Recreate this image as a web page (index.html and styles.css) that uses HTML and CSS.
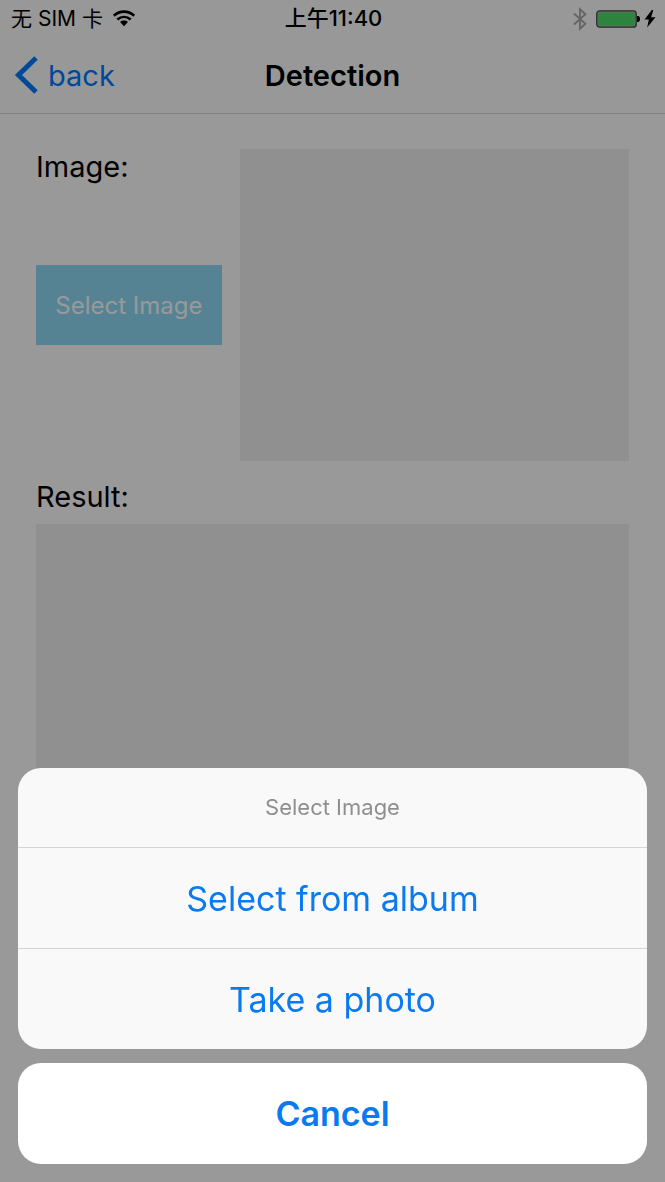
FILE: index.html
```html
<!DOCTYPE html>
<html lang="en">
<head>
<meta charset="utf-8">
<meta name="viewport" content="width=device-width, initial-scale=1">
<title>Detection</title>
<link rel="stylesheet" href="styles.css">
</head>
<body>
<div class="screen">
  <header class="top">
    <div class="status">
      <div class="status-left">
        <span>无 SIM 卡</span>
        <svg class="wifi" width="22" height="17" viewBox="0 0 22 17" aria-hidden="true">
          <path d="M.8 5.700C6.800 .2 15.200 .2 21.200 5.700" fill="none" stroke="#000" stroke-width="2.800"/>
          <path d="M4.300 9.500c4-3.400 9.400-3.400 13.400 0" fill="none" stroke="#000" stroke-width="2.600"/>
          <path d="M7.100 12c2.300-1.900 5.500-1.900 7.800 0L11 16.200z"/>
        </svg>
      </div>
      <div class="status-time">上午11:40</div>
      <div class="status-right">
        <svg width="16" height="24" viewBox="0 0 16 24" aria-hidden="true">
          <path d="M2 6.500l11.400 10.300L8 21.800V2.200l5.400 5L2 17.500" fill="none" stroke="#a9a9a9" stroke-width="1.900"/>
        </svg>
        <svg width="44" height="18" viewBox="0 0 44 18" aria-hidden="true">
          <rect x=".8" y=".8" width="39.400" height="16.400" rx="2.800" fill="#b4b4b4" stroke="#404a42" stroke-width="1.300"/>
          <rect x="2.400" y="2.400" width="36.200" height="13.200" rx="1.200" fill="#4cdc64"/>
          <path d="M41 6h1c1.200 0 2 1 2 3s-.8 3-2 3h-1z"/>
        </svg>
        <svg width="12" height="18" viewBox="0 0 12 18" aria-hidden="true">
          <path d="M7.800 0L.5 9.600h4.300L3.200 17.500 11.500 7.300H7.100L9.300 0z"/>
        </svg>
      </div>
    </div>
    <nav class="nav">
      <a class="back" href="#">
        <svg width="24" height="38" viewBox="0 0 24 38" aria-hidden="true">
          <path d="M22 2L4.500 19 22 36" fill="none" stroke="#007aff" stroke-width="5"/>
        </svg>
        <span>back</span>
      </a>
      <h1 class="title">Detection</h1>
    </nav>
  </header>
  <main class="content">
    <section class="picker">
      <div class="picker-side">
        <h2 class="label">Image:</h2>
        <button class="select" type="button">Select Image</button>
      </div>
      <div class="preview"></div>
    </section>
    <h2 class="label result-label">Result:</h2>
    <div class="preview result"></div>
  </main>
</div>
<div class="backdrop">
  <div class="sheet" role="dialog" aria-modal="true" aria-labelledby="sheet-title">
    <div class="group">
      <p class="sheet-title" id="sheet-title">Select Image</p>
      <button class="action" type="button">Select from album</button>
      <button class="action" type="button">Take a photo</button>
    </div>
    <button class="action cancel" type="button">Cancel</button>
  </div>
</div>
</body>
</html>
```
FILE: styles.css
```css
* {
  box-sizing: border-box;
}

body {
  margin: 0;
  background: #fff;
  color: #000;
  font-family: Inter, "Noto Sans CJK SC", sans-serif;
}

button {
  border: 0;
  font: inherit;
  cursor: pointer;
}

.screen {
  display: flex;
  flex-direction: column;
  min-height: 100vh;
}

.top {
  background: #fdfdfd;
  border-bottom: 1px solid #d8d8d8;
}

.status {
  display: grid;
  grid-template-columns: 1fr auto 1fr;
  align-items: center;
  height: 37px;
  padding: 0 9px 0 11px;
  font-size: 21px;
  line-height: 37px;
}

.status-left,
.status-right {
  display: flex;
  align-items: center;
  gap: 10px;
}

.status-right {
  justify-content: flex-end;
  gap: 8px;
}

.status-right svg:last-child {
  margin-left: -4px;
}

.status-time {
  font-size: 22px;
  font-weight: 500;
}

.nav {
  display: grid;
  grid-template-columns: 1fr auto 1fr;
  align-items: center;
  height: 76px;
  padding: 0 14px;
}

.back {
  display: flex;
  align-items: center;
  gap: 10px;
  color: #007aff;
  font-size: 29px;
  text-decoration: none;
}

.title {
  margin: 0;
  font-size: 29px;
  font-weight: 600;
}

.content {
  padding: 35px 36px;
}

.picker {
  display: grid;
  grid-template-columns: 186fr 390fr;
  gap: 18px;
  height: 312px;
}

.picker-side {
  display: grid;
  grid-template-rows: 1fr auto 1fr;
}

.label {
  margin: 0;
  font-size: 29px;
  font-weight: 400;
  line-height: 36px;
}

.select {
  height: 80px;
  padding: 0;
  background: #8fdaf7;
  color: #fff;
  font-size: 24px;
}

.preview {
  background: #f0f0f0;
}

.result-label {
  padding: 18px 0 9px;
}

.result {
  height: 312px;
}

.backdrop {
  position: fixed;
  inset: 0;
  display: flex;
  align-items: flex-end;
  padding: 18px;
  background: rgba(0, 0, 0, 0.4);
}

.sheet {
  display: flex;
  flex: 1;
  flex-direction: column;
  gap: 14px;
}

.group {
  overflow: hidden;
  border-radius: 23px;
  background: #f9f9f9;
}

.sheet-title {
  margin: 0;
  color: #8f8f8f;
  font-size: 22px;
  line-height: 79px;
  text-align: center;
}

.action {
  display: block;
  width: 100%;
  height: 101px;
  border-top: 1px solid #d5d5d7;
  background: transparent;
  color: #0a7af0;
  font-size: 34px;
}

.cancel {
  border-top: 0;
  border-radius: 23px;
  background: #fff;
  font-weight: 600;
}
```
